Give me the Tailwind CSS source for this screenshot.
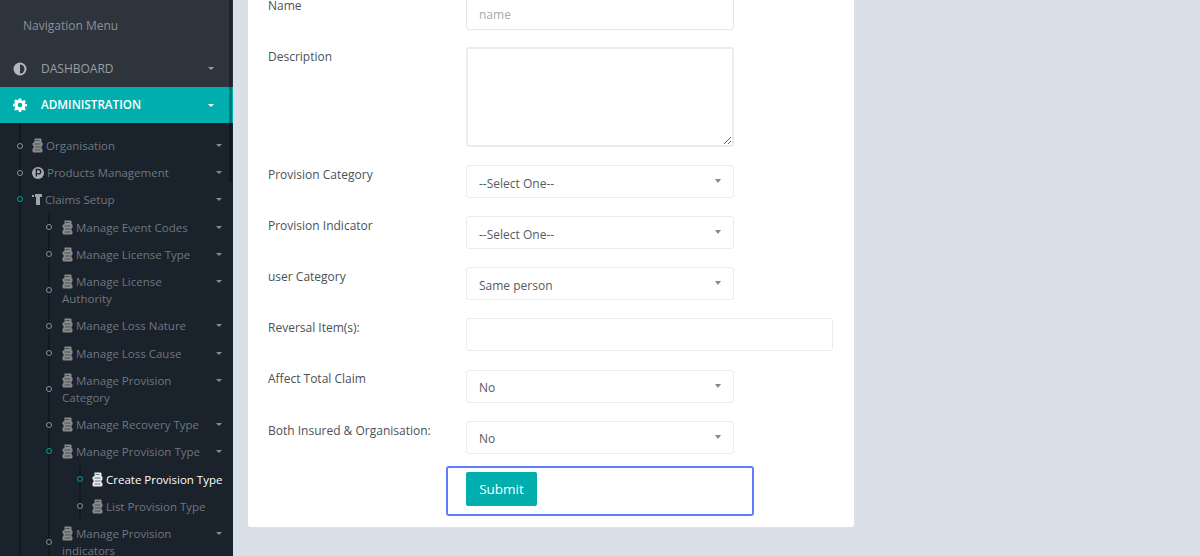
<!DOCTYPE html>
<html lang="en">
<head>
    <meta charset="UTF-8">
    <meta name="viewport" content="width=device-width, initial-scale=1.0">
    <title>Create Provision Type</title>
    <script src="https://cdn.jsdelivr.net/npm/@tailwindcss/browser@4"></script>
</head>
<body class="h-screen overflow-hidden bg-[#d9e0e8] font-['Open_Sans',sans-serif] text-[12px] flex">
    <svg class="hidden">
        <symbol id="doc" viewBox="0 0 11 15">
            <path d="M2.5.5h6a1 1 0 0 1 1 1V4l1 1v2.5l-1 1v2l1 1V13a1.5 1.5 0 0 1-1.5 1.5H2A1.5 1.5 0 0 1 .5 13v-2l1-1V8l-1-1V5l2-1z" fill="currentColor"/>
            <path d="M3.5 2.5h4M2.5 6h6M3 9h5.5M2.5 12h6" stroke="#1a222b" stroke-width="0.8" opacity="0.7"/>
        </symbol>
    </svg>

    <!-- sidebar -->
    <aside class="relative w-[233px] shrink-0 bg-[#1a222b] overflow-hidden text-[#6f7780]">
        <div class="bg-[#2d343c] h-[50px] pl-[23px] pt-[17px] leading-[18px] text-[#8b9197]">Navigation Menu</div>
        <a class="h-[37px] bg-[#2d343c] flex items-center pl-[13px] pr-[19px] text-[#9a9fa5]">
            <svg class="w-[14px] h-[14px]" viewBox="0 0 14 14"><circle cx="7" cy="7" r="6.5" fill="#b4b8bc"/><path d="M7 2.5a4.5 4.5 0 0 1 0 9z" fill="#2d343c"/></svg>
            <span class="ml-[14px] flex-1">DASHBOARD</span>
            <span class="w-0 h-0 border-x-[3.5px] border-x-transparent border-t-[3.5px] border-t-[#9a9fa5]"></span>
        </a>
        <a class="h-[36px] bg-[#00aead] flex items-center pl-[13px] pr-[19px] text-white text-[11.7px] font-semibold">
            <svg class="w-[14px] h-[14px]" viewBox="0 0 24 24"><path fill="white" fill-rule="evenodd" d="M10 1h4l.6 3.2 1.8.8 2.8-1.8 2.8 2.8-1.8 2.8.7 1.7L24 10v4l-3.1.6-.7 1.8 1.8 2.7-2.8 2.8-2.8-1.8-1.8.8L14 24h-4l-.6-3.1-1.8-.8-2.8 1.8L2 19.1l1.8-2.7-.7-1.8L0 14v-4l3.1-.5.7-1.7L2 5l2.8-2.8 2.8 1.8 1.8-.8zM12 8a4 4 0 1 0 0 8 4 4 0 0 0 0-8z"/></svg>
            <span class="ml-[14px] flex-1">ADMINISTRATION</span>
            <span class="w-0 h-0 border-x-[3.5px] border-x-transparent border-t-[3.5px] border-t-white"></span>
        </a>

        <ul class="pt-[9px] ml-[19px] border-l-2 border-[#121920] text-[11.5px] leading-[17.2px]">
            <li class="relative py-[5px] pl-[11px] pr-[11px] flex justify-between">
                <i class="absolute -left-[4px] top-1/2 -mt-[3px] w-[6px] h-[6px] rounded-full border border-[#8a9299]"></i>
                <span><svg class="inline w-[11px] h-[15px] align-[-3px] text-[#8a8c8c]"><use href="#doc"/></svg> Organisation</span>
                <span class="w-0 h-0 mt-[7px] border-x-[3.5px] border-x-transparent border-t-[3.5px] border-t-[#858b91]"></span>
            </li>
            <li class="relative py-[5px] pl-[11px] pr-[11px] flex justify-between">
                <i class="absolute -left-[4px] top-1/2 -mt-[3px] w-[6px] h-[6px] rounded-full border border-[#8a9299]"></i>
                <span><svg class="inline w-[12px] h-[12px] align-[-2px]" viewBox="0 0 12 12"><circle cx="6" cy="6" r="6" fill="#a8acb0"/><path d="M4.3 9.5v-7h2.2a2.2 2.2 0 0 1 0 4.4H4.3" fill="none" stroke="#1a222b" stroke-width="1.3"/></svg> Products Management</span>
                <span class="w-0 h-0 mt-[7px] border-x-[3.5px] border-x-transparent border-t-[3.5px] border-t-[#858b91]"></span>
            </li>
            <li class="relative pt-[5px] pl-[11px]">
                <i class="absolute -left-[4px] top-[10px] w-[6px] h-[6px] rounded-full border border-[#06a09e]"></i>
                <div class="flex justify-between pr-[11px]">
                    <span><svg class="inline w-[10px] h-[13px] align-[-2px]" viewBox="0 0 10 13"><path d="M0 2h2v2H0zM3 1h7v3H8v8H4V4H3z" fill="#a0a4a8"/></svg> Claims Setup</span>
                    <span class="w-0 h-0 mt-[7px] border-x-[3.5px] border-x-transparent border-t-[3.5px] border-t-[#858b91]"></span>
                </div>

                <ul class="mt-[5px] -ml-[11px] pl-[28px] -mb-[40px]">
                    <div class="border-l-2 border-[#121920] -ml-px">
                        <li class="relative py-[5px] pl-[12px] pr-[11px] flex justify-between">
                            <i class="absolute -left-[4px] top-1/2 -mt-[3px] w-[6px] h-[6px] rounded-full border border-[#8a9299]"></i>
                            <span class="w-[145px]"><svg class="inline w-[11px] h-[15px] align-[-3px] text-[#8a8c8c]"><use href="#doc"/></svg> Manage Event Codes</span>
                            <span class="w-0 h-0 mt-[7px] border-x-[3.5px] border-x-transparent border-t-[3.5px] border-t-[#858b91]"></span>
                        </li>
                        <li class="relative py-[5px] pl-[12px] pr-[11px] flex justify-between">
                            <i class="absolute -left-[4px] top-1/2 -mt-[3px] w-[6px] h-[6px] rounded-full border border-[#8a9299]"></i>
                            <span class="w-[145px]"><svg class="inline w-[11px] h-[15px] align-[-3px] text-[#8a8c8c]"><use href="#doc"/></svg> Manage License Type</span>
                            <span class="w-0 h-0 mt-[7px] border-x-[3.5px] border-x-transparent border-t-[3.5px] border-t-[#858b91]"></span>
                        </li>
                        <li class="relative py-[5px] pl-[12px] pr-[11px] flex justify-between">
                            <i class="absolute -left-[4px] top-1/2 -mt-[3px] w-[6px] h-[6px] rounded-full border border-[#8a9299]"></i>
                            <span class="w-[145px]"><svg class="inline w-[11px] h-[15px] align-[-3px] text-[#8a8c8c]"><use href="#doc"/></svg> Manage License Authority</span>
                            <span class="w-0 h-0 mt-[7px] border-x-[3.5px] border-x-transparent border-t-[3.5px] border-t-[#858b91]"></span>
                        </li>
                        <li class="relative py-[5px] pl-[12px] pr-[11px] flex justify-between">
                            <i class="absolute -left-[4px] top-1/2 -mt-[3px] w-[6px] h-[6px] rounded-full border border-[#8a9299]"></i>
                            <span class="w-[145px]"><svg class="inline w-[11px] h-[15px] align-[-3px] text-[#8a8c8c]"><use href="#doc"/></svg> Manage Loss Nature</span>
                            <span class="w-0 h-0 mt-[7px] border-x-[3.5px] border-x-transparent border-t-[3.5px] border-t-[#858b91]"></span>
                        </li>
                        <li class="relative py-[5px] pl-[12px] pr-[11px] flex justify-between">
                            <i class="absolute -left-[4px] top-1/2 -mt-[3px] w-[6px] h-[6px] rounded-full border border-[#8a9299]"></i>
                            <span class="w-[145px]"><svg class="inline w-[11px] h-[15px] align-[-3px] text-[#8a8c8c]"><use href="#doc"/></svg> Manage Loss Cause</span>
                            <span class="w-0 h-0 mt-[7px] border-x-[3.5px] border-x-transparent border-t-[3.5px] border-t-[#858b91]"></span>
                        </li>
                        <li class="relative py-[5px] pl-[12px] pr-[11px] flex justify-between">
                            <i class="absolute -left-[4px] top-1/2 -mt-[3px] w-[6px] h-[6px] rounded-full border border-[#8a9299]"></i>
                            <span class="w-[145px]"><svg class="inline w-[11px] h-[15px] align-[-3px] text-[#8a8c8c]"><use href="#doc"/></svg> Manage Provision Category</span>
                            <span class="w-0 h-0 mt-[7px] border-x-[3.5px] border-x-transparent border-t-[3.5px] border-t-[#858b91]"></span>
                        </li>
                        <li class="relative py-[5px] pl-[12px] pr-[11px] flex justify-between">
                            <i class="absolute -left-[4px] top-1/2 -mt-[3px] w-[6px] h-[6px] rounded-full border border-[#8a9299]"></i>
                            <span class="w-[145px]"><svg class="inline w-[11px] h-[15px] align-[-3px] text-[#8a8c8c]"><use href="#doc"/></svg> Manage Recovery Type</span>
                            <span class="w-0 h-0 mt-[7px] border-x-[3.5px] border-x-transparent border-t-[3.5px] border-t-[#858b91]"></span>
                        </li>
                        <li class="relative pt-[5px] pl-[12px]">
                            <i class="absolute -left-[4px] top-[10px] w-[6px] h-[6px] rounded-full border border-[#06a09e]"></i>
                            <div class="flex justify-between pr-[11px]">
                                <span class="w-[145px]"><svg class="inline w-[11px] h-[15px] align-[-3px] text-[#8a8c8c]"><use href="#doc"/></svg> Manage Provision Type</span>
                                <span class="w-0 h-0 mt-[7px] border-x-[3.5px] border-x-transparent border-t-[3.5px] border-t-[#858b91]"></span>
                            </div>
                            <ul class="mt-[5px] ml-[17px] border-l-2 border-[#121920]">
                                <li class="relative py-[5px] pl-[11px] whitespace-nowrap text-white">
                                    <i class="absolute -left-[4px] top-1/2 -mt-[3px] w-[6px] h-[6px] rounded-full border border-[#06a09e]"></i>
                                    <svg class="inline w-[11px] h-[15px] align-[-3px] text-[#e8eaec]"><use href="#doc"/></svg> Create Provision Type
                                </li>
                                <li class="relative py-[5px] pl-[11px] whitespace-nowrap">
                                    <i class="absolute -left-[4px] top-1/2 -mt-[3px] w-[6px] h-[6px] rounded-full border border-[#8a9299]"></i>
                                    <svg class="inline w-[11px] h-[15px] align-[-3px] text-[#8a8c8c]"><use href="#doc"/></svg> List Provision Type
                                </li>
                            </ul>
                        </li>
                        <li class="relative py-[5px] pl-[12px] pr-[11px] flex justify-between">
                            <i class="absolute -left-[4px] top-1/2 -mt-[3px] w-[6px] h-[6px] rounded-full border border-[#8a9299]"></i>
                            <span class="w-[145px]"><svg class="inline w-[11px] h-[15px] align-[-3px] text-[#8a8c8c]"><use href="#doc"/></svg> Manage Provision indicators</span>
                            <span class="w-0 h-0 mt-[7px] border-x-[3.5px] border-x-transparent border-t-[3.5px] border-t-[#858b91]"></span>
                        </li>
                    </div>
                </ul>
            </li>
        </ul>
        <!-- scrollbar strip lying over the menu -->
        <div class="absolute top-0 right-[1px] w-[3px] h-[182px] bg-black/30"></div>
    </aside>

    <!-- form card -->
    <main class="pl-[15px] w-[621px] shrink-0">
        <form class="h-[530px] -mt-[3px] w-[606px] bg-white rounded-[3px] pl-[20px] text-[#4b5157]">
            <div class="flex items-start h-[50px]">
                <label class="w-[198px] leading-[17px]">Name</label>
                <input type="text" placeholder="name" class="w-[267.5px] h-[33px] border border-[#e2e7ee] rounded-[3px] px-[12px] pt-[2px] placeholder:text-[#a7abb0]">
            </div>
            <div class="flex items-start h-[118px]">
                <label class="w-[198px] leading-[17px] pt-px">Description</label>
                <textarea class="w-[267.5px] h-[100px] border-2 border-[#e9edf2] rounded-[3px] block"></textarea>
            </div>
            <div class="flex items-start h-[51px]">
                <label class="w-[198px] leading-[17px] pt-px">Provision Category</label>
                <div class="relative w-[267.5px] h-[33px] border border-[#e8ecf1] rounded-[3px] px-[12px] leading-[33px] pt-px text-[#555b61]">--Select One--<span class="absolute right-[12px] top-[13px] w-0 h-0 border-x-[3.5px] border-x-transparent border-t-[4px] border-t-[#888]"></span></div>
            </div>
            <div class="flex items-start h-[51px]">
                <label class="w-[198px] leading-[17px] pt-px">Provision Indicator</label>
                <div class="relative w-[267.5px] h-[33px] border border-[#e8ecf1] rounded-[3px] px-[12px] leading-[33px] pt-px text-[#555b61]">--Select One--<span class="absolute right-[12px] top-[13px] w-0 h-0 border-x-[3.5px] border-x-transparent border-t-[4px] border-t-[#888]"></span></div>
            </div>
            <div class="flex items-start h-[51px]">
                <label class="w-[198px] leading-[17px] pt-px">user Category</label>
                <div class="relative w-[267.5px] h-[33px] border border-[#e8ecf1] rounded-[3px] px-[12px] leading-[33px] pt-px text-[#555b61]">Same person<span class="absolute right-[12px] top-[13px] w-0 h-0 border-x-[3.5px] border-x-transparent border-t-[4px] border-t-[#888]"></span></div>
            </div>
            <div class="flex items-start h-[52px]">
                <label class="w-[198px] leading-[17px] pt-px">Reversal Item(s):</label>
                <input type="text" class="w-[367px] h-[33px] border border-[#e8ecf1] rounded-[3px]">
            </div>
            <div class="flex items-start h-[51px]">
                <label class="w-[198px] leading-[17px]">Affect Total Claim</label>
                <div class="relative w-[267.5px] h-[33px] border border-[#e8ecf1] rounded-[3px] px-[12px] leading-[33px] text-[#555b61]">No<span class="absolute right-[12px] top-[13px] w-0 h-0 border-x-[3.5px] border-x-transparent border-t-[4px] border-t-[#888]"></span></div>
            </div>
            <div class="flex items-start h-[45px]">
                <label class="w-[198px] leading-[17px] pt-px">Both Insured &amp; Organisation:</label>
                <div class="relative w-[267.5px] h-[33px] border border-[#e8ecf1] rounded-[3px] px-[12px] leading-[33px] text-[#555b61]">No<span class="absolute right-[12px] top-[13px] w-0 h-0 border-x-[3.5px] border-x-transparent border-t-[4px] border-t-[#888]"></span></div>
            </div>
            <div class="ml-[178px] w-[308px] h-[50px] border-2 border-[#5f7cff] rounded-[3px] pl-[18px] pt-[4px]">
                <button type="button" class="w-[71px] h-[34px] bg-[#00aead] text-white text-[13.5px] rounded-[2px]">Submit</button>
            </div>
        </form>
    </main>
</body>
</html>
